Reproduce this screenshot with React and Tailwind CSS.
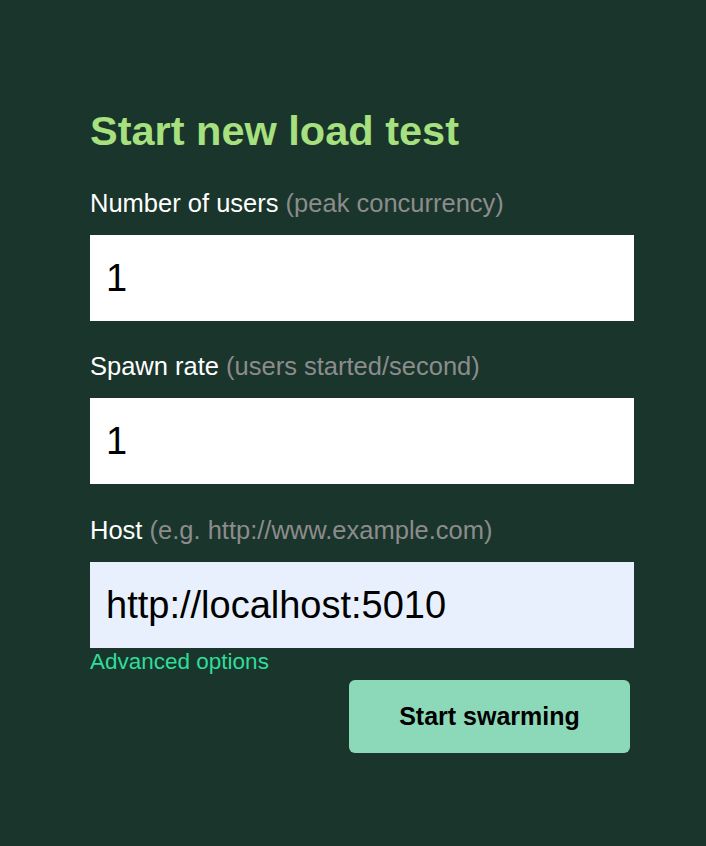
import React from "react";

function Field({ label, hint, value, autofill, className }) {
  return (
    <div className={className}>
      <label className="block text-[25.5px] leading-[30px] text-white">
        {label} <span className="text-[#8c8c8c]">{hint}</span>
      </label>
      <input
        readOnly
        value={value}
        className={`mt-[17px] block h-[86px] w-full px-4 text-[38px] text-black outline-none ${autofill ? "bg-[#e8f0fe]" : "bg-white"}`}
        style={{ fontFamily: '"Liberation Sans", Arial, sans-serif' }}
      />
    </div>
  );
}

export default function App() {
  return (
    <div
      className="min-h-[846px] w-full bg-[#1a352b]"
      style={{ fontFamily: '"Liberation Sans", Arial, sans-serif' }}
    >
      <div className="ml-[90px] w-[544px] pt-[107px]">
        <h1 className="text-[41.5px] font-bold leading-[48px] text-[#a6e07f]">Start new load test</h1>
        <Field className="mt-[33px]" label="Number of users" hint="(peak concurrency)" value="1" />
        <Field className="mt-[30px]" label="Spawn rate" hint="(users started/second)" value="1" />
        <Field className="mt-[31px]" label="Host" hint="(e.g. http://www.example.com)" value="http://localhost:5010" autofill />
        <a className="mt-[1px] block text-[22.5px] leading-[26px] text-[#2fdc9b]">Advanced options</a>
        <div className="flex justify-end pr-1 mt-[5px]">
          <button className="h-[73px] w-[281px] rounded-[6px] bg-[#8bd9b9] text-[25px] font-bold text-black">
            Start swarming
          </button>
        </div>
      </div>
    </div>
  );
}
